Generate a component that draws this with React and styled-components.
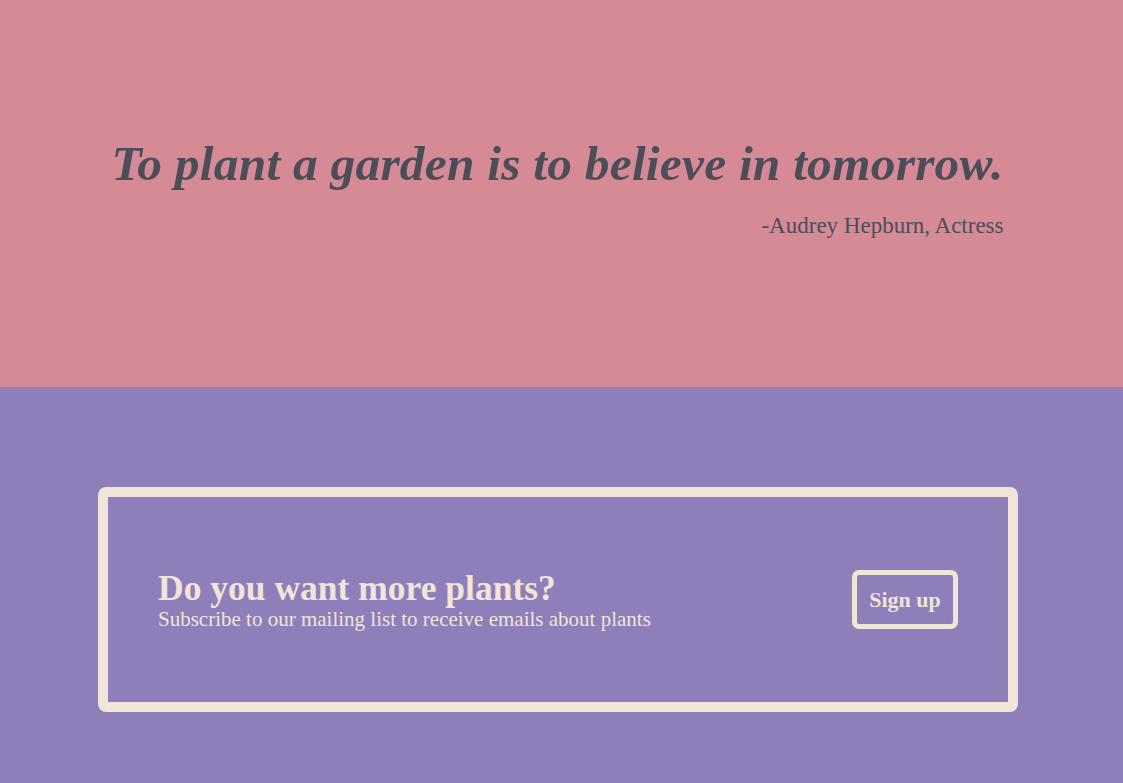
import React from "react";
import styled, { createGlobalStyle } from "styled-components";

const GlobalStyle = createGlobalStyle`
  html, body {
    margin: 0;
    padding: 0;
  }
  body {
    font-family: "Liberation Serif", "DejaVu Serif", serif;
    background: #8e7fba;
  }
`;

const QuoteSection = styled.section`
  height: 387px;
  background: #d68a96;
  display: flex;
  justify-content: center;
  padding: 136px 8px 0 0;
  box-sizing: border-box;
`;

const QuoteBlock = styled.figure`
  margin: 0;
  display: flex;
  flex-direction: column;
  align-items: flex-end;
  color: #4b4e58;
`;

const Quote = styled.blockquote`
  margin: 0;
  font-style: italic;
  font-weight: bold;
  font-size: 49.5px;
  line-height: 56px;
  letter-spacing: 0.2px;
`;

const Author = styled.figcaption`
  margin-top: 21px;
  font-size: 23px;
  line-height: 26px;
`;

const SignupSection = styled.section`
  height: 396px;
  background: #8e7fba;
  padding: 100px 105px 0 98px;
  box-sizing: border-box;
`;

const Card = styled.div`
  height: 225px;
  box-sizing: border-box;
  border: 10px solid #f1e4d8;
  border-radius: 8px;
  padding: 0 50px;
  display: flex;
  align-items: center;
  justify-content: space-between;
  color: #f1e4d8;
`;

const Text = styled.div`
  display: flex;
  flex-direction: column;
`;

const Title = styled.h2`
  margin: 0;
  font-size: 35.5px;
  line-height: 38px;
  font-weight: bold;
`;

const Subtitle = styled.p`
  margin: 0;
  font-size: 21px;
  line-height: 24px;
`;

const Button = styled.button`
  width: 106px;
  height: 59px;
  box-sizing: border-box;
  background: transparent;
  border: 5px solid #f1e4d8;
  border-radius: 7px;
  color: #f1e4d8;
  font-family: inherit;
  font-weight: bold;
  font-size: 22px;
  cursor: pointer;
  padding: 0;
`;

export default function App() {
  return (
    <>
      <GlobalStyle />
      <QuoteSection>
        <QuoteBlock>
          <Quote>To plant a garden is to believe in tomorrow.</Quote>
          <Author>-Audrey Hepburn, Actress</Author>
        </QuoteBlock>
      </QuoteSection>
      <SignupSection>
        <Card>
          <Text>
            <Title>Do you want more plants?</Title>
            <Subtitle>Subscribe to our mailing list to receive emails about plants</Subtitle>
          </Text>
          <Button>Sign up</Button>
        </Card>
      </SignupSection>
    </>
  );
}
